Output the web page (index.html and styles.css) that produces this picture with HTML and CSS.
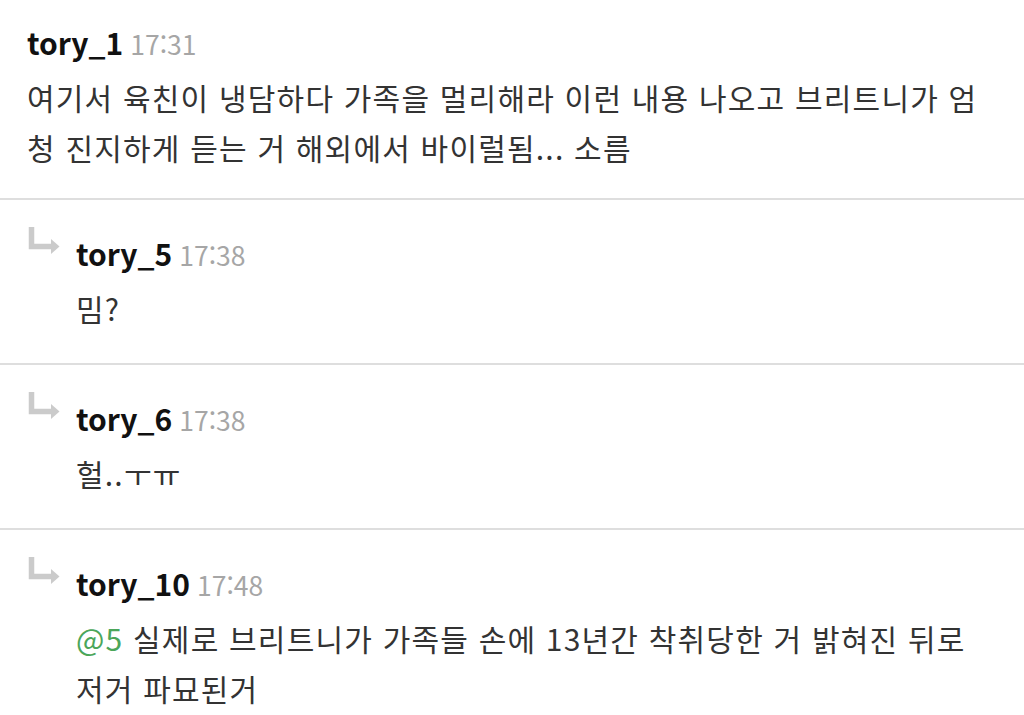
FILE: index.html
```html
<!DOCTYPE html>
<html lang="ko">
<head>
  <meta charset="UTF-8" />
  <meta name="viewport" content="width=device-width, initial-scale=1.0"/>
  <title>댓글</title>
  <link rel="stylesheet" href="styles.css">
</head>

<body>
  <ul class="comments">
    <li class="comment">
      <div class="comment-body">
        <div class="meta"><span class="nick">tory_1</span><span class="time">17:31</span></div>
        <p class="text">여기서 육친이 냉담하다 가족을 멀리해라 이런 내용 나오고 브리트니가 엄청 진지하게 듣는 거 해외에서 바이럴됨... 소름</p>
      </div>
    </li>

    <li class="comment reply">
      <svg class="reply-icon" width="36" height="32" viewBox="0 0 36 32">
        <path d="M4.5 1 V20.5 H25" />
        <polygon points="32.5,20.5 24,13 24,28" />
      </svg>
      <div class="comment-body">
        <div class="meta"><span class="nick">tory_5</span><span class="time">17:38</span></div>
        <p class="text">밈?</p>
      </div>
    </li>

    <li class="comment reply">
      <svg class="reply-icon" width="36" height="32" viewBox="0 0 36 32">
        <path d="M4.5 1 V20.5 H25" />
        <polygon points="32.5,20.5 24,13 24,28" />
      </svg>
      <div class="comment-body">
        <div class="meta"><span class="nick">tory_6</span><span class="time">17:38</span></div>
        <p class="text">헐..ㅜㅠ</p>
      </div>
    </li>

    <li class="comment reply">
      <svg class="reply-icon" width="36" height="32" viewBox="0 0 36 32">
        <path d="M4.5 1 V20.5 H25" />
        <polygon points="32.5,20.5 24,13 24,28" />
      </svg>
      <div class="comment-body">
        <div class="meta"><span class="nick">tory_10</span><span class="time">17:48</span></div>
        <p class="text"><span class="mention">@5</span> 실제로 브리트니가 가족들 손에 13년간 착취당한 거 밝혀진 뒤로 저거 파묘된거</p>
      </div>
    </li>
  </ul>
</body>
</html>
```

FILE: styles.css
```css
body {
  margin: 0;
  background: #fff;
  font-family: "Noto Sans CJK KR", "Noto Sans", sans-serif;
  color: #333;
  overflow: hidden;
}

.comments {
  list-style: none;
  margin: 0;
  padding: 0;
}

/* One comment */
.comment {
  display: flex;
  padding: 33px 30px 30px 27px;
  border-bottom: 2px solid #dedede;
}

.comment:first-child {
  padding-top: 22px;
  padding-bottom: 26px;
}

.comment-body {
  flex: 1;
  min-width: 0;
}

.meta {
  display: flex;
  align-items: baseline;
  gap: 7px;
  height: 40px;
  line-height: 40px;
}

.nick {
  font-size: 30px;
  font-weight: bold;
  color: #111;
}

.time {
  font-size: 26.5px;
  color: #a6a6a6;
}

.text {
  margin: 10px 0 0;
  font-size: 30px;
  line-height: 50px;
  letter-spacing: 1.2px;
}

.mention {
  color: #4ba65a;
}

/* Reply arrow */
.reply-icon {
  flex: 0 0 auto;
  margin: -7px 13px 0 0;
}

.reply-icon path {
  fill: none;
  stroke: #cbcbcb;
  stroke-width: 5.5;
}

.reply-icon polygon {
  fill: #cbcbcb;
}
```
